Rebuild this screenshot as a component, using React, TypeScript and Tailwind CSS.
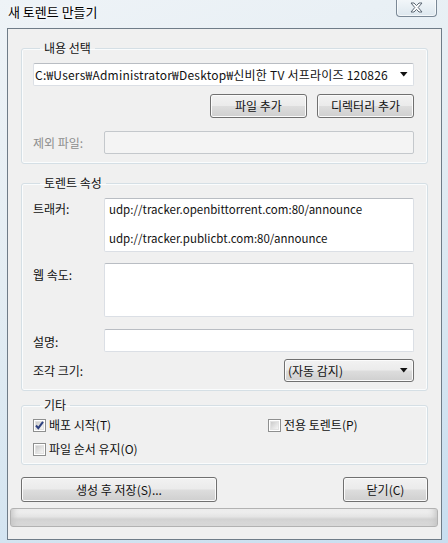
import React from "react";

const font = "[font-family:'Noto_Sans_CJK_KR','Noto_Sans',sans-serif]";

function Arrow() {
  return (
    <svg width="8" height="5" viewBox="0 0 8 5" className="shrink-0">
      <path d="M0 0H7.5L3.75 4.5Z" fill="#111" />
    </svg>
  );
}

function Button({ label, className }: { label: string; className?: string }) {
  return (
    <div
      className={
        "flex items-center justify-center rounded-[3px] border border-[#707070] bg-[linear-gradient(to_bottom,#f2f2f2_0%,#ebebeb_48%,#dddddd_52%,#cfcfcf_100%)] shadow-[inset_0_0_0_1px_#fbfbfb] text-[12px] leading-4 text-[#111] " +
        (className ?? "")
      }
    >
      {label}
    </div>
  );
}

function TextBox({ className, children }: { className?: string; children?: React.ReactNode }) {
  return (
    <div
      className={
        "rounded-[2px] border border-[#dbdfe5] border-t-[#b9bdc3] bg-white " + (className ?? "")
      }
    >
      {children}
    </div>
  );
}

function CheckBox({ checked, label }: { checked?: boolean; label: string }) {
  return (
    <div className="flex items-center gap-[3px] h-4">
      <div className="w-[13px] h-[13px] border border-[#8e8f8f] bg-white p-px">
        <div className="relative w-full h-full bg-[linear-gradient(135deg,#cbcbcb,#f6f6f6)] border border-[#e2e2e2]">
          {checked && (
            <svg width="11" height="11" viewBox="0 0 11 11" className="absolute -left-[2px] -top-[2px]">
              <path d="M2 5.5L4.3 8.2L9 1.8" stroke="#2e4180" strokeWidth="2" fill="none" />
            </svg>
          )}
        </div>
      </div>
      <span className="text-[12px] leading-4">{label}</span>
    </div>
  );
}

function Group({ title, className, children }: { title: string; className?: string; children: React.ReactNode }) {
  return (
    <fieldset
      className={
        "mx-[13px] rounded-[3px] border border-[#d5dfe5] shadow-[inset_0_0_0_1px_#fafcfd] " + (className ?? "")
      }
    >
      <legend className="ml-[7px] px-[4px] text-[12px] leading-4">{title}</legend>
      {children}
    </fieldset>
  );
}

export default function App() {
  return (
    <div
      className={
        "w-[448px] h-[543px] flex flex-col overflow-hidden bg-[linear-gradient(160deg,#eef3f7_0%,#e4edf3_40%,#d7e6f1_70%,#c8def0_100%)] text-[#111] " +
        font
      }
    >
      {/* title bar */}
      <div className="h-[28px] flex items-start justify-between shrink-0">
        <span className="pl-[8px] pt-[4px] text-[13px] leading-4 text-black [text-shadow:0_0_6px_#ffffff,0_0_3px_#ffffff]">
          새 토렌트 만들기
        </span>
        <div className="mr-[11px] -mt-px w-[41px] h-[18px] flex items-center justify-center rounded-b-[4px] border border-[#7a8896] border-t-0 bg-[linear-gradient(to_bottom,#f3f7fa,#dde7ee)] shadow-[inset_0_0_0_1px_#ffffffaa]">
          <svg width="13" height="11" viewBox="0 0 13 11">
            <path
              d="M1 1H4L6.5 3.6L9 1H12L8.2 5.5L12 10H9L6.5 7.4L4 10H1L4.8 5.5Z"
              fill="#fff"
              stroke="#5a6673"
              strokeWidth="1"
              strokeLinejoin="round"
            />
          </svg>
        </div>
      </div>

      {/* client area */}
      <div className="ml-[7px] mr-[6px] mb-[3px] flex-1 flex flex-col border border-[#6f7c88] bg-[#f0f0f0]">
        <Group title="내용 선택" className="mt-[11px] pl-[11px] pr-[13px] pb-[9px]">
          <TextBox className="mt-[7px] h-[23px] flex items-center justify-between pl-[1px] pr-[5px]">
            <span className="text-[12px] leading-4 whitespace-nowrap tracking-[0.22px]">
              C:₩Users₩Administrator₩Desktop₩신비한 TV 서프라이즈 120826
            </span>
            <Arrow />
          </TextBox>
          <div className="mt-[8px] flex justify-end gap-[10px]">
            <Button label="파일 추가" className="w-[97px] h-[24px]" />
            <Button label="디렉터리 추가" className="w-[97px] h-[24px]" />
          </div>
          <div className="mt-[13px] flex items-center">
            <span className="w-[71px] text-[12px] leading-4 text-[#8d8d8d]">제외 파일:</span>
            <div className="flex-1 h-[23px] rounded-[2px] border border-[#c4c8cc] bg-[#f4f4f4]" />
          </div>
        </Group>

        <Group title="토렌트 속성" className="mt-[11px] pl-[11px] pr-[13px] pb-[8px]">
          <div className="mt-[7px] flex items-start">
            <span className="w-[71px] pt-[3px] text-[12px] leading-4">트래커:</span>
            <TextBox className="flex-1 h-[54px] pl-[4px] pt-[3px] text-[11.5px] leading-[14.5px]">
              <div>udp://tracker.openbittorrent.com:80/announce</div>
              <div className="h-[14.5px]" />
              <div>udp://tracker.publicbt.com:80/announce</div>
            </TextBox>
          </div>
          <div className="mt-[11px] flex items-start">
            <span className="w-[71px] pt-[4px] text-[12px] leading-4">웹 속도:</span>
            <TextBox className="flex-1 h-[54px]" />
          </div>
          <div className="mt-[12px] flex items-center">
            <span className="w-[71px] pt-[3px] text-[12px] leading-4">설명:</span>
            <TextBox className="flex-1 h-[23px]" />
          </div>
          <div className="mt-[7px] flex items-center justify-between">
            <span className="text-[12px] leading-4">조각 크기:</span>
            <div className="w-[130px] h-[23px] flex items-center justify-between pl-[3px] pr-[5px] rounded-[3px] border border-[#707070] bg-[linear-gradient(to_bottom,#f2f2f2_0%,#ebebeb_48%,#dddddd_52%,#cfcfcf_100%)] shadow-[inset_0_0_0_1px_#fbfbfb]">
              <span className="text-[12px] leading-4">(자동 감지)</span>
              <Arrow />
            </div>
          </div>
        </Group>

        <Group title="기타" className="mt-[6px] pl-[11px] pr-[13px] pb-[7px]">
          <div className="mt-[4px] flex">
            <div className="w-[235px]">
              <CheckBox checked label="배포 시작(T)" />
            </div>
            <CheckBox label="전용 토렌트(P)" />
          </div>
          <div className="mt-[8px]">
            <CheckBox label="파일 순서 유지(O)" />
          </div>
        </Group>

        <div className="mt-[12px] mx-[13px] flex justify-between">
          <Button label="생성 후 저장(S)..." className="w-[196px] h-[25px]" />
          <Button label="닫기(C)" className="w-[85px] h-[25px]" />
        </div>

        <div className="mt-[6px] ml-[2px] mr-[3px] h-[19px] rounded-[3px] border border-[#b2b2b2] bg-[linear-gradient(to_bottom,#f4f4f4_0%,#e4e4e4_45%,#d2d2d2_60%,#dcdcdc_100%)] shadow-[inset_6px_0_6px_-4px_#c4c4c4,inset_-6px_0_6px_-4px_#c4c4c4]" />
      </div>
    </div>
  );
}
